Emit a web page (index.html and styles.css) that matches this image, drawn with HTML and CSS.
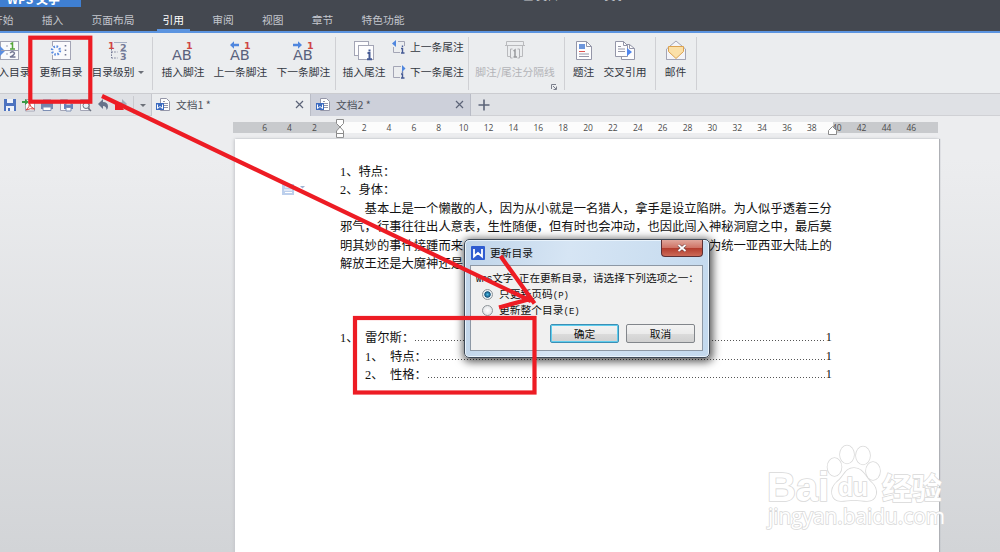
FILE: index.html
```
<!DOCTYPE html>
<html lang="zh-CN">

<head>
    <meta charset="UTF-8">
    <meta name="viewport" content="width=device-width, initial-scale=1.0">
    <title>WPS 文字</title>
    <link rel="stylesheet" href="styles.css">
</head>

<body>
    <header class="header">
        <div class="titlebar">
            <div class="app-name">WPS 文字</div>
            <div class="doc-name">▣ 文档1 * - WPS 文字</div>
        </div>
        <nav class="menu">
            <a>开始</a>
            <a>插入</a>
            <a>页面布局</a>
            <a class="active">引用</a>
            <a>审阅</a>
            <a>视图</a>
            <a>章节</a>
            <a>特色功能</a>
        </nav>
    </header>

    <div class="ribbon">
        <div class="group group-toc">
            <div class="tool">
                <svg width="22" height="22" viewBox="0 0 22 22">
                    <rect x="2.5" y="1.5" width="18" height="18" fill="#fafafc" stroke="#a3a5b5" />
                    <path d="M2 6l5 5-5 5z" fill="#5b8de0" />
                    <path d="M8 6h2M8 14h2M3 10.500h17" stroke="#9a9cb0" />
                    <path d="M12.500 4l2-1v6M12 9h5" fill="none" stroke="#55a63a" stroke-width="1.500" />
                    <path d="M12 13q3-2.500 4.500 0q0 2-4.500 4h5.500" fill="none" stroke="#737894" stroke-width="1.400" />
                </svg>
                <span>插入目录</span>
            </div>
            <div class="tool">
                <svg width="22" height="22" viewBox="0 0 22 22">
                    <rect x="2.500" y="1.500" width="18" height="18" fill="#fafafc" stroke="#a3a5b5" />
                    <circle cx="6" cy="10.500" r="5.500" fill="#fafafc" />
                    <circle cx="6" cy="10.500" r="4" fill="none" stroke="#5b8de0" stroke-width="2.400" stroke-dasharray="1.600 1.540" />
                    <path d="M15.500 5v1.600M15.500 9.500v1.600M15.500 14v1.600" stroke="#737894" stroke-width="1.600" />
                </svg>
                <span>更新目录</span>
            </div>
            <div class="tool">
                <svg width="22" height="22" viewBox="0 0 22 22">
                    <path d="M7 2.500h13M13 11.500h7" stroke="#a6b0c4" />
                    <path d="M4.500 9v9M4.500 12h6M4.500 18h6" fill="none" stroke="#737894" stroke-dasharray="1.500 1.200" />
                    <text class="num red" x="1" y="8.500">1</text>
                    <text class="num" x="13" y="11">2</text>
                    <text class="num" x="13" y="20">3</text>
                </svg>
                <span>目录级别<i class="caret"></i></span>
            </div>
        </div>

        <div class="group group-footnote">
            <div class="tool">
                <svg width="24" height="22" viewBox="0 0 24 22">
                    <text class="ab" x="1" y="20">AB</text>
                    <text class="num red" x="15" y="8.500">1</text>
                </svg>
                <span>插入脚注</span>
            </div>
            <div class="tool wide">
                <svg width="24" height="22" viewBox="0 0 24 22">
                    <text class="ab" x="1" y="20">AB</text>
                    <text class="num red" x="15" y="8.500">1</text>
                    <path d="M1 5l4-3.800v2.500h5v2.600H5v2.500z" fill="#4f86de" />
                </svg>
                <span>上一条脚注</span>
            </div>
            <div class="tool wide">
                <svg width="24" height="22" viewBox="0 0 24 22">
                    <text class="ab" x="1" y="20">AB</text>
                    <text class="num red" x="15" y="8.500">1</text>
                    <path d="M10 5L6 1.200v2.500H1v2.600h5v2.500z" fill="#4f86de" />
                </svg>
                <span>下一条脚注</span>
            </div>
        </div>

        <div class="group group-endnote">
            <div class="tool">
                <svg width="22" height="22" viewBox="0 0 22 22">
                    <rect x="1.500" y="1.500" width="14" height="14" fill="#fdfdfe" stroke="#a3a5b5" />
                    <rect x="5.500" y="5.500" width="15" height="14" fill="#fdfdfe" stroke="#a3a5b5" />
                    <path d="M16.500 9.500v2M14.500 13h2v6M14 19.300h5" fill="none" stroke="#455a94" stroke-width="2" />
                </svg>
                <span>插入尾注</span>
            </div>
            <div class="stack">
                <div class="row">
                    <svg width="14" height="14" viewBox="0 0 14 14">
                        <path d="M6 1.500h6.500V6M1.500 7v5.500H8" fill="none" stroke="#a3a5b5" />
                        <path d="M0 3.500L4 0v7z" fill="#4f86de" />
                        <path d="M10.500 5.500v1.500M9 8.500h1.500V13M9 13h3.500" fill="none" stroke="#455a94" stroke-width="1.400" />
                    </svg>
                    <span>上一条尾注</span>
                </div>
                <div class="row">
                    <svg width="14" height="14" viewBox="0 0 14 14">
                        <path d="M9 1.500H1.500v11H8" fill="none" stroke="#a3a5b5" />
                        <path d="M13.500 3.500L10 0v7z" fill="#4f86de" />
                        <path d="M10.500 6.500v1.200M9 9h1.500v4M9 13h3.500" fill="none" stroke="#455a94" stroke-width="1.400" />
                    </svg>
                    <span>下一条尾注</span>
                </div>
            </div>
        </div>

        <div class="group group-separator">
            <div class="tool disabled">
                <svg width="22" height="22" viewBox="0 0 22 22">
                    <path d="M2.500 1.500h17v4h-17zM1 5.500h20M3.500 5.500v11h3M18.500 5.500v11h-3" fill="none" stroke="#b9babd" />
                    <path d="M8.500 9h-2v9h2M13.500 9h2v9h-2" fill="none" stroke="#b0b1b5" />
                    <path d="M9.500 11l1.500-1v7M9.500 17h3.500" fill="none" stroke="#999a9e" stroke-width="1.500" />
                </svg>
                <span>脚注/尾注分隔线</span>
            </div>
            <svg class="launcher" width="6" height="6" viewBox="0 0 6 6">
                <path d="M.5 5V.5H5M2.500 5.500h3v-3M2 2l3 3" fill="none" stroke="#7b7f8c" />
            </svg>
        </div>

        <div class="group group-ref">
            <div class="tool narrow">
                <svg width="18" height="22" viewBox="0 0 18 22">
                    <path d="M1.500 1.500h10l5 5v13h-15z" fill="#fdfdfe" stroke="#9496a8" />
                    <path d="M11.500 1.500v5h5" fill="none" stroke="#9496a8" />
                    <rect x="4" y="4" width="6" height="5" fill="#6d96dc" />
                    <path d="M4 11.500h6" stroke="#dd5552" />
                    <path d="M4 14h10M4 16.500h10" stroke="#9496a8" />
                </svg>
                <span>题注</span>
            </div>
            <div class="tool">
                <svg width="22" height="22" viewBox="0 0 22 22">
                    <path d="M7.500 4.500h8l5 4v11h-13z" fill="#fdfdfe" stroke="#9496a8" />
                    <path d="M1.500 1.500h8l4 4v11h-12z" fill="#fdfdfe" stroke="#9496a8" />
                    <path d="M9.500 1.500v4h4M4 6.500h3M4 9h7M4 11.500h7M15.500 4.500v4h5" fill="none" stroke="#9496a8" />
                    <path d="M13 8l5 4-5 4z" fill="#4f86ee" />
                </svg>
                <span>交叉引用</span>
            </div>
        </div>

        <div class="group group-mail">
            <div class="tool narrow">
                <svg width="22" height="22" viewBox="0 0 22 22">
                    <path d="M1.500 9l9.500-8 9.500 8v10.500h-19z" fill="#f4f4f8" stroke="#a3a5b5" />
                    <path d="M3.500 6.500h15v5l-7.500 7-7.500-7z" fill="#fbe0a8" stroke="#dba251" />
                    <path d="M1.500 19.500V10M20.500 10v9.500" stroke="#a3a5b5" />
                </svg>
                <span>邮件</span>
            </div>
        </div>
    </div>

    <div class="tabbar">
        <div class="quick">
            <svg width="14" height="14" viewBox="0 0 14 14">
                <path d="M1 1h12v12H1z" fill="#4d73c0" />
                <path d="M4 1h6v4H4zM3 8h8v5H3z" fill="#eef2fa" />
                <path d="M5 10h2v3H5z" fill="#4d73c0" />
            </svg>
            <svg width="14" height="14" viewBox="0 0 14 14">
                <path d="M3.500 1.500h6l3 3v8.500h-9z" fill="#fff" stroke="#a3a5b5" />
                <path d="M4 12q4-3 3.500-7q0 4 5 6q-4-1-8.500 1" fill="none" stroke="#d8433e" />
                <path d="M0 3h3V1l4 3-4 3V5H0z" fill="#399a46" />
            </svg>
            <svg width="14" height="14" viewBox="0 0 14 14">
                <path d="M3 2h8v3H3z" fill="#fff" stroke="#7d8fb4" />
                <path d="M1 5h12v6H1z" fill="#7386ad" />
                <path d="M3 9h8v3.500H3z" fill="#fff" stroke="#7d8fb4" />
            </svg>
            <svg width="14" height="14" viewBox="0 0 14 14">
                <path d="M1.500 1.500h7l2 2v9h-9z" fill="#f7f7fa" stroke="#a3a5b5" />
                <path d="M5 6h9v5H5z" fill="#6580ba" />
                <path d="M7 4.500h5V7H7zM7 9.500h5V13H7z" fill="#fff" stroke="#7d8fb4" />
            </svg>
            <svg width="14" height="14" viewBox="0 0 14 14">
                <path d="M2.500 1.500h9v11h-9z" fill="#f7f7fa" stroke="#a3a5b5" />
                <circle cx="8" cy="7.500" r="3" fill="#e5f1f7" stroke="#6b7280" />
                <path d="M10 10l3 3" stroke="#6b7280" stroke-width="1.500" />
            </svg>
            <svg width="14" height="14" viewBox="0 0 14 14">
                <path d="M2 6l5-5v3q5 0 5 4.500 0 2-1.500 3.500 0-4-3.500-4v3z" fill="#66728a" />
            </svg>
            <svg width="14" height="14" viewBox="0 0 14 14">
                <path d="M12 6L7 1v3Q2 4 2 8.500q0 2 1.500 3.500 0-4 3.500-4v3z" fill="#a4abb8" />
            </svg>
        </div>
        <div class="quick-more"><i class="caret"></i></div>
        <div class="tab current">
            <svg width="15" height="15" viewBox="0 0 15 15">
                <path d="M4.500 1.500h6l3 3v9h-9z" fill="#fff" stroke="#9496a8" />
                <path d="M7 4.500h2M7 6.500h5M8 8.500h4M8 10.500h4" stroke="#9496a8" />
                <path d="M0 6h8v7H0z" fill="#3c6bc0" />
                <path d="M1.500 7.500v4L4 9.500l2.500 2v-4" fill="none" stroke="#fff" />
            </svg>
            <span>文档1 *</span>
            <svg class="close" width="9" height="9" viewBox="0 0 9 9">
                <path d="M1 1l7 7M8 1L1 8" stroke="#5c6478" stroke-width="1.200" />
            </svg>
        </div>
        <div class="tab">
            <svg width="15" height="15" viewBox="0 0 15 15">
                <path d="M4.500 1.500h6l3 3v9h-9z" fill="#fff" stroke="#9496a8" />
                <path d="M7 4.500h2M7 6.500h5M8 8.500h4M8 10.500h4" stroke="#9496a8" />
                <path d="M0 6h8v7H0z" fill="#3c6bc0" />
                <path d="M1.500 7.500v4L4 9.500l2.500 2v-4" fill="none" stroke="#fff" />
            </svg>
            <span>文档2 *</span>
            <svg class="close" width="9" height="9" viewBox="0 0 9 9">
                <path d="M1 1l7 7M8 1L1 8" stroke="#5c6478" stroke-width="1.200" />
            </svg>
        </div>
        <svg class="new-tab" width="12" height="12" viewBox="0 0 12 12">
            <path d="M6 .5v11M.5 6h11" stroke="#5c6478" stroke-width="1.600" />
        </svg>
    </div>

    <main class="workspace">
        <div class="ruler">
            <span>6</span><span>4</span><span>2</span><span></span><span>2</span><span>4</span><span>6</span><span>8</span><span>10</span><span>12</span><span>14</span><span>16</span><span>18</span><span>20</span><span>22</span><span>24</span><span>26</span><span>28</span><span>30</span><span>32</span><span>34</span><span>36</span><span>38</span><span>40</span><span>42</span><span>44</span><span>46</span>
            <svg class="indent-left" width="9" height="20" viewBox="0 0 9 20">
                <path d="M.5.5h7v4L4 8 .5 4.500zM4 8l3.500 4v2.500h-7V12zM.5 14.500h7v4h-7z" fill="#fff" stroke="#8b8b8b" />
            </svg>
            <svg class="indent-right" width="9" height="9" viewBox="0 0 9 9">
                <path d="M.5 8.500v-4L4.500.5l4 4v4z" fill="#fff" stroke="#8b8b8b" />
            </svg>
        </div>
        <div class="page">
            <p><b>1</b>、特点：</p>
            <p><b>2</b>、身体：</p>
            <p class="indent">基本上是一个懒散的人，因为从小就是一名猎人，拿手是设立陷阱。为人似乎透着三分</p>
            <p>邪气，行事往往出人意表，生性随便，但有时也会冲动，也因此闯入神秘洞窟之中，最后莫</p>
            <p>明其妙的事件接踵而来，就此踏进命运漩涡之中，最终他究竟是会成为统一亚西亚大陆上的</p>
            <p>解放王还是大魔神还是</p>
            <div class="toc">
                <div class="toc-row"><span class="toc-num"><b>1</b>、</span>雷尔斯：<i class="dots"></i><b>1</b></div>
                <div class="toc-row sub"><span class="toc-num"><b>1</b>、</span>特点：<i class="dots"></i><b>1</b></div>
                <div class="toc-row sub"><span class="toc-num"><b>2</b>、</span>性格：<i class="dots"></i><b>1</b></div>
            </div>
            <svg class="smart-tag" width="24" height="12" viewBox="0 0 24 12">
                <rect width="12" height="11" fill="#bccfec" />
                <path d="M3 3h6M2 6h8M3 8.500h7" stroke="#fff" />
                <path d="M18 2h5l-2.500 2.500z" fill="#9fb4d4" />
            </svg>
        </div>
    </main>

    <div class="dialog">
        <div class="dialog-title">
            <svg width="14" height="14" viewBox="0 0 14 14">
                <rect width="14" height="14" rx="1" fill="#2f5cd0" />
                <path d="M3 3v7.500L7 7l4 3.500V3" fill="none" stroke="#fff" stroke-width="1.800" />
            </svg>
            <span>更新目录</span>
            <button class="dialog-close">
                <svg width="10" height="8" viewBox="0 0 10 8">
                    <path d="M1.500 1l7 6M8.500 1l-7 6" stroke="#6b4040" stroke-width="3" />
                    <path d="M1.500 1l7 6M8.500 1l-7 6" stroke="#fff" stroke-width="1.800" />
                </svg>
            </button>
        </div>
        <div class="dialog-body">
            <div class="message"><tt>WPS</tt>文字<tt>&nbsp;</tt>正在更新目录，请选择下列选项之一：</div>
            <label class="option"><i class="radio checked"></i><span>只更新页码<tt>(P)</tt></span></label>
            <label class="option"><i class="radio"></i><span>更新整个目录<tt>(E)</tt></span></label>
            <div class="buttons">
                <button class="btn primary">确定</button>
                <button class="btn">取消</button>
            </div>
        </div>
    </div>

    <svg class="watermark" width="190" height="100" viewBox="0 0 190 100">
        <text class="wm-big" x="4" y="61" textLength="62">Bai</text>
        <g class="paw">
            <ellipse cx="71.500" cy="27" rx="7" ry="9" />
            <ellipse cx="84" cy="14.500" rx="7" ry="9" />
            <ellipse cx="100" cy="15.500" rx="7" ry="9" />
            <ellipse cx="110" cy="31" rx="7" ry="9" />
            <path d="M91 28c-9 0-10 9-17 14-8 7-6 19 4 19 5 0 8-1 13-1s8 1 13 1c10 0 12-11 5-18-7-6-9-15-18-15z" />
        </g>
        <text class="wm-du" x="75" y="56" textLength="30">du</text>
        <text class="wm-cn" x="119" y="59" textLength="60">经验</text>
        <text class="wm-url" x="5" y="84" textLength="177" lengthAdjust="spacingAndGlyphs">jingyan.baidu.com</text>
    </svg>

    <!-- red callouts drawn over the whole window -->
    <svg class="marks" width="1000" height="552" viewBox="0 0 1000 552">
        <rect x="30.300" y="37.700" width="60" height="64" />
        <rect x="355" y="318" width="179.500" height="74.500" />
        <path d="M102 96L531 301M500.500 256L534.500 303.500M499 307.500L532 298.500" />
        <path class="blot" d="M115 104h5l4 6h-9z" />
    </svg>
</body>

</html>
```
FILE: styles.css
```
* {
    box-sizing: border-box;
}

body {
    margin: 0;
    width: 1000px;
    height: 552px;
    overflow: hidden;
    position: relative;
    display: flex;
    flex-direction: column;
    font-family: "Noto Sans CJK SC", sans-serif;
    font-size: 10.75px;
    color: #33373f;
    background: #ebedef;
}

svg {
    display: block;
    flex: none;
}

/* header */
.header {
    flex: none;
    height: 33px;
    background: #444850;
    border-bottom: 2px solid #5b94e0;
}

.titlebar {
    height: 8px;
    display: flex;
    overflow: hidden;
}

.app-name {
    width: 81px;
    height: 16px;
    margin-top: -9px;
    padding-left: 7px;
    line-height: 16px;
    font-size: 12px;
    font-weight: bold;
    color: #fff;
    background: #3f7fd2;
}

.doc-name {
    margin: -12px 0 0 442px;
    line-height: 16px;
    color: #c5c8ce;
}

.menu {
    height: 23px;
    display: flex;
    gap: 21.200px;
    margin-left: -11.500px;
}

.menu a {
    height: 23px;
    padding: 0 3.500px;
    line-height: 23px;
    color: #c3c6cd;
}

.menu a.active {
    color: #fff;
    border-bottom: 2px solid #5b94e0;
    padding: 0 6px;
    margin: 0 -2.500px;
}

/* ribbon */
.ribbon {
    flex: none;
    height: 61px;
    display: flex;
    padding-top: 4px;
    border-bottom: 1px solid #cbccd0;
    background: #ebedef;
}

.group {
    position: relative;
    height: 53px;
    display: flex;
    border-right: 1px solid #cfd0d4;
}

.group-toc {
    width: 153px;
}

.group-toc .tool:first-child {
    margin-left: -17px;
}

.group-toc .tool:last-child {
    width: 61px;
}

.group-footnote {
    width: 183px;
    padding-left: 4px;
}

.group-endnote {
    width: 133px;
    padding-left: 2px;
}

.group-separator {
    width: 96px;
    padding-left: 1px;
}

.group-ref {
    width: 91px;
    padding-left: 3px;
}

.group-mail {
    width: 41px;
    padding-left: 4px;
}

.tool {
    width: 52px;
    display: flex;
    flex: none;
    flex-direction: column;
    align-items: center;
    padding-top: 3px;
    white-space: nowrap;
}

.tool span {
    line-height: 14px;
    margin-top: 3px;
}

.tool.wide {
    width: 63px;
}

.tool.narrow {
    width: 31px;
}

.tool.disabled {
    width: 90px;
    color: #b3b4b8;
}

.caret {
    display: inline-block;
    border: 3px solid transparent;
    border-top: 3.500px solid #6c7078;
    border-bottom: 0;
    margin-left: 3px;
    vertical-align: 2px;
}

.num {
    font: bold 9.500px "DejaVu Sans", sans-serif;
    fill: #737894;
}

.num.red {
    fill: #cf4545;
}

.ab {
    font: 14.500px "DejaVu Sans", sans-serif;
    letter-spacing: -.2px;
    fill: #59617c;
}

.stack {
    display: flex;
    flex-direction: column;
    gap: 11px;
    padding: 3px 0 0 2px;
}

.row {
    display: flex;
    align-items: center;
    gap: 4px;
    height: 14px;
    line-height: 14px;
    white-space: nowrap;
}

.launcher {
    position: absolute;
    right: 7px;
    bottom: 0;
}

/* quick access and document tabs */
.tabbar {
    flex: none;
    height: 22px;
    display: flex;
    align-items: center;
    background: #dfe1e5;
    border-bottom: 1px solid #d0d1d5;
}

.quick {
    width: 133px;
    display: flex;
    gap: 4.700px;
    padding-left: 3px;
}

.quick-more {
    width: 18px;
    height: 18px;
    padding: 1px 0 0 3px;
    border-left: 1px solid #c9cacf;
}

.tab {
    height: 22px;
    display: flex;
    align-items: center;
    gap: 5px;
    width: 160px;
    padding: 0 6px 0 5px;
    border-right: 1px solid #b9bcc6;
    background: #cdd0da;
    color: #50545d;
}

.tab.current {
    background: #ebedef;
    border-left: 1px solid #c5c7cd;
    padding-left: 4px;
}

.close {
    margin-left: auto;
}

.new-tab {
    margin-left: 7px;
}

/* document */
.workspace {
    flex: 1;
    min-height: 0;
    background: linear-gradient(#ecedef, #ecedef 10%, #d2d4d7);
}

.ruler {
    position: relative;
    display: flex;
    width: 705px;
    height: 11px;
    margin: 0 0 6px 233px;
    padding-left: 19.200px;
    background: linear-gradient(90deg, #c8cacd 106px, #fcfcfc 106px, #fcfcfc 600px, #c8cacd 600px);
}

.workspace {
    padding-top: 6px;
}

.ruler span {
    width: 24.880px;
    flex: none;
    text-align: center;
    font: 8.500px/11px "Open Sans", sans-serif;
    color: #4b4b4b;
}

.indent-left {
    position: absolute;
    left: 103px;
    top: -3px;
}

.indent-right {
    position: absolute;
    left: 595px;
    top: 4px;
}

.page {
    position: relative;
    width: 704px;
    height: 420px;
    margin-left: 235px;
    padding: 22.750px 0 0 105px;
    background: #fff;
    box-shadow: 1px 0 1px #aeb0b5, -1px 0 3px #c4c6ca;
    font-size: 12.300px;
    line-height: 18.500px;
    color: #111;
}

.page p {
    margin: 0;
    white-space: nowrap;
    text-spacing-trim: space-all;
}

.page p.indent {
    padding-left: 2em;
}

.page b {
    display: inline-block;
    width: 6.150px;
    font: 12.300px "Liberation Serif", serif;
}

.toc {
    width: 492px;
    margin-top: 55.500px;
}

.toc-row {
    display: flex;
    height: 18.500px;
    white-space: nowrap;
}

.toc-row.sub {
    padding-left: 25px;
}

.toc-row > b {
    line-height: 18.500px;
}

.toc-num {
    width: 25px;
}

.dots {
    flex: 1;
    height: 1px;
    margin: 12px 1px 0 1px;
    background: repeating-linear-gradient(90deg, #555 0 1px, transparent 1px 3px);
}

.smart-tag {
    position: absolute;
    left: 47px;
    top: 45px;
}

/* dialog */
.dialog {
    position: absolute;
    left: 464px;
    top: 239px;
    width: 246px;
    height: 119px;
    padding: 0 6px 6px 5px;
    border: 1px solid #3f4a57;
    border-radius: 5px;
    background: linear-gradient(100deg, #bfd4e9, #d6e5f4 40%, #c3d9ee);
    box-shadow: inset 0 0 0 1px #e9f3fc, 1px 2px 9px 2px rgba(0, 0, 0, .65);
    color: #111;
}

.dialog tt {
    font: 9px "Liberation Mono", monospace;
}

.dialog-title {
    height: 25px;
    display: flex;
    align-items: center;
    gap: 5px;
    padding-left: 1px;
}

.dialog-close {
    width: 42px;
    height: 17px;
    margin: -8px 0 0 auto;
    display: flex;
    align-items: center;
    justify-content: center;
    padding: 0;
    border: 1px solid #5d3034;
    border-top: 0;
    border-radius: 0 0 4px 4px;
    background: linear-gradient(#e0a79c, #cf7466 48%, #b23b2c 50%, #cc6a58);
}

.dialog-body {
    height: 86px;
    padding: 3px 7px 0 5px;
    border: 1px solid #8d98a5;
    background: #f0f0f0;
}

.message {
    height: 17px;
    line-height: 17px;
    font-size: 10.600px;
    white-space: nowrap;
}

.option {
    display: flex;
    align-items: center;
    height: 16px;
    line-height: 16px;
    padding-left: 6px;
    white-space: nowrap;
}

.radio {
    width: 11px;
    height: 11px;
    margin-right: 6px;
    border: 1px solid #8e9499;
    border-radius: 50%;
    background: radial-gradient(#fff, #d8dbde);
}

.radio.checked {
    background: radial-gradient(circle, #4fc0ea 0, #12527c 2.800px, #e8eef2 3.600px);
}

.buttons {
    display: flex;
    justify-content: flex-end;
    gap: 7px;
    margin-top: 6px;
}

.btn {
    width: 69px;
    height: 19px;
    padding: 0;
    border: 1px solid #82868b;
    border-radius: 2px;
    background: linear-gradient(#f3f3f3, #ebebeb 50%, #dcdcdc 50%, #d0d0d0);
    font: 10.750px/16px "Noto Sans CJK SC", sans-serif;
    color: #111;
}

.btn.primary {
    border-color: #3c8fb5;
    box-shadow: inset 0 0 0 1px #5fcdee;
}

/* watermark */
.watermark {
    position: absolute;
    left: 763px;
    top: 440px;
}

.watermark text,
.paw {
    fill: #fff;
    stroke: #d9d9d9;
    stroke-width: 1.600px;
    paint-order: stroke;
}

.wm-big {
    font: bold 40px "Liberation Sans", sans-serif;
}

.wm-du {
    font: bold 25px "Liberation Sans", sans-serif;
}

.wm-cn {
    font: bold 30px "Noto Sans CJK SC", sans-serif;
}

.wm-url {
    font: 21px "Open Sans", sans-serif;
}

/* callouts */
.marks {
    position: absolute;
    left: 0;
    top: 0;
    fill: none;
    stroke: #ed1c24;
    stroke-width: 4.200px;
}

.marks .blot {
    fill: #ed1c24;
    stroke: none;
}
```
